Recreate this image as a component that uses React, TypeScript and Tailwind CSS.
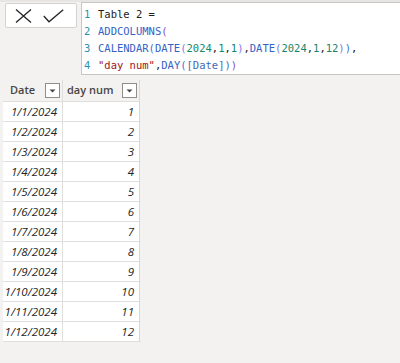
import React from 'react';

const mono = { fontFamily: '"DejaVu Sans Mono", "Liberation Mono", monospace' };

const rows = Array.from({ length: 12 }, (_, i) => ({ date: `1/${i + 1}/2024`, num: i + 1 }));

const Fn: React.FC<{ children: React.ReactNode }> = ({ children }) => (
  <span className="text-[#3462c6]">{children}</span>
);
const P1: React.FC<{ children: React.ReactNode }> = ({ children }) => (
  <span className="text-[#8a4fc4]">{children}</span>
);
const P2: React.FC<{ children: React.ReactNode }> = ({ children }) => (
  <span className="text-[#3a6fd8]">{children}</span>
);
const P3: React.FC<{ children: React.ReactNode }> = ({ children }) => (
  <span className="text-[#7b7be6]">{children}</span>
);
const Num: React.FC<{ children: React.ReactNode }> = ({ children }) => (
  <span className="text-[#16866a]">{children}</span>
);

const FilterBox: React.FC = () => (
  <div className="w-[15px] h-[15px] border border-[#8f8d8b] bg-white flex items-center justify-center shrink-0">
    <svg width="7" height="4" viewBox="0 0 7 4">
      <path d="M0.5 0.5 L6.5 0.5 L3.5 3.5 Z" fill="#444" />
    </svg>
  </div>
);

const App: React.FC = () => {
  return (
    <div className="w-[400px] h-[363px] bg-[#f3f2f1] overflow-hidden" style={{ fontFamily: '"Open Sans", "Noto Sans", sans-serif' }}>
      <div className="h-[2px] bg-[#e6e5e4]" />
      <div className="flex items-start">
        <div className="ml-[5px] mt-[1px] w-[72px] h-[25px] bg-white border border-[#d4d2d0] rounded-[2px] flex items-center">
          <svg className="ml-[9px]" width="17" height="14" viewBox="0 0 17 14">
            <path d="M1 0.5 L16 13.5 M16 0.5 L1 13.5" stroke="#252423" strokeWidth="1.3" fill="none" />
          </svg>
          <svg className="ml-[11px]" width="21" height="14" viewBox="0 0 21 14">
            <path d="M0.8 7 L6 12.8 L20.2 0.8" stroke="#252423" strokeWidth="1.3" fill="none" />
          </svg>
        </div>
        <div
          className="ml-[4px] flex-1 h-[73px] bg-white border border-r-0 border-[#c8c6c4] pt-[3px] text-[10.5px] leading-[17px] text-[#1b1b1b] whitespace-pre"
          style={mono}
        >
          <div className="flex">
            <span className="w-[16px] pl-[2px] text-[#2b91af]">1</span>
            <span>Table 2 =</span>
          </div>
          <div className="flex">
            <span className="w-[16px] pl-[2px] text-[#2b91af]">2</span>
            <span><Fn>ADDCOLUMNS</Fn><P1>(</P1></span>
          </div>
          <div className="flex">
            <span className="w-[16px] pl-[2px] text-[#2b91af]">3</span>
            <span>
              <Fn>CALENDAR</Fn><P2>(</P2><Fn>DATE</Fn><P3>(</P3><Num>2024</Num>,<Num>1</Num>,<Num>1</Num><P3>)</P3>,<Fn>DATE</Fn><P3>(</P3><Num>2024</Num>,<Num>1</Num>,<Num>12</Num><P3>)</P3><P2>)</P2>,
            </span>
          </div>
          <div className="flex">
            <span className="w-[16px] pl-[2px] text-[#2b91af]">4</span>
            <span>
              <span className="text-[#a31515]">"day num"</span>,<Fn>DAY</Fn><P2>(</P2><span className="text-[#3f6bb5]">[Date]</span><P2>)</P2><P1>)</P1>
            </span>
          </div>
        </div>
      </div>

      <div className="ml-[3px] mt-[5px] w-[137px] border-r border-[#d8d6d4]">
        <div className="flex h-[22px] bg-[#f3f2f1] border-b border-[#e1dfdd]">
          <div className="w-[60px] flex items-center justify-between pl-[7px] pr-[2px] border-r border-[#e1dfdd]">
            <span className="text-[11px] font-semibold text-[#484644]">Date</span>
            <FilterBox />
          </div>
          <div className="flex-1 flex items-center justify-between pl-[4px] pr-[2px]">
            <span className="text-[11px] font-semibold text-[#484644]">day num</span>
            <FilterBox />
          </div>
        </div>
        {rows.map(r => (
          <div key={r.num} className="flex h-[20px] bg-white border-b border-[#e1dfdd] text-[11.5px] italic text-[#252423]">
            <div className="w-[60px] flex items-center justify-end pr-[5px] border-r border-[#e1dfdd]">{r.date}</div>
            <div className="flex-1 flex items-center justify-end pr-[5px]">{r.num}</div>
          </div>
        ))}
      </div>
    </div>
  );
};

export default App;
